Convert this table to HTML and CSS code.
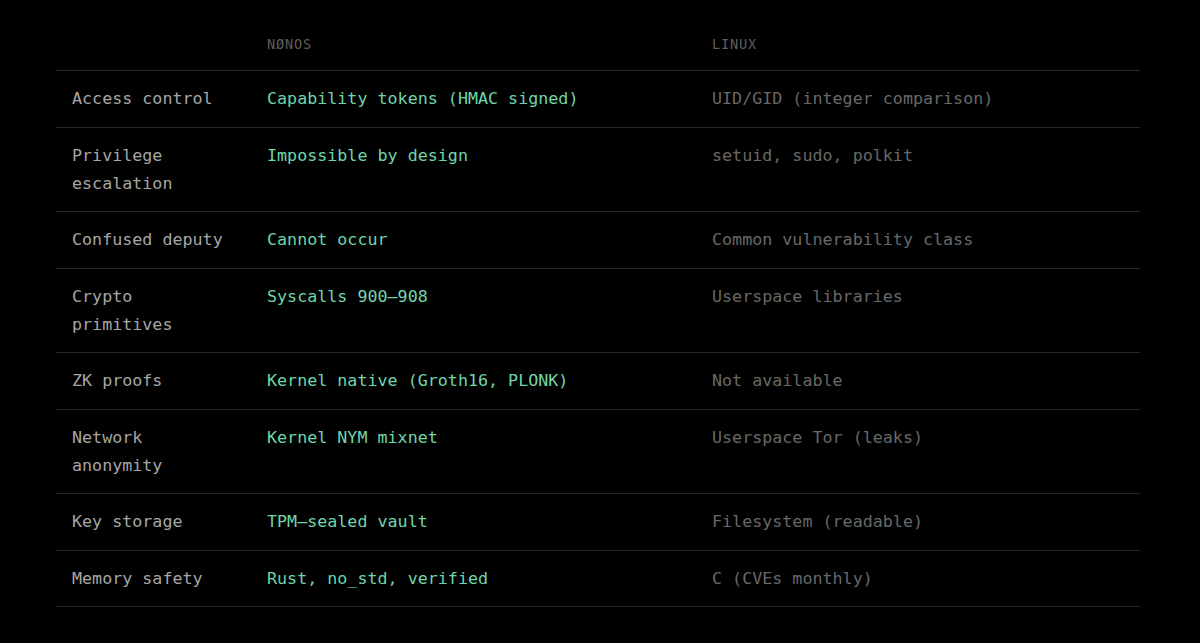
FILE: index.html
```html
<!DOCTYPE html>
<html lang="en">
<head>
<meta charset="utf-8">
<title>NØNOS vs Linux</title>
<link rel="stylesheet" href="styles.css">
</head>
<body>
<main class="page">
  <table class="cmp">
    <colgroup>
      <col class="c-feat">
      <col class="c-nonos">
      <col class="c-linux">
    </colgroup>
    <thead>
      <tr>
        <th></th>
        <th>NØNOS</th>
        <th>LINUX</th>
      </tr>
    </thead>
    <tbody>
      <tr><td class="feat">Access control</td><td class="nonos">Capability tokens (HMAC signed)</td><td class="linux">UID/GID (integer comparison)</td></tr>
      <tr><td class="feat">Privilege<br>escalation</td><td class="nonos">Impossible by design</td><td class="linux">setuid, sudo, polkit</td></tr>
      <tr><td class="feat">Confused deputy</td><td class="nonos">Cannot occur</td><td class="linux">Common vulnerability class</td></tr>
      <tr><td class="feat">Crypto<br>primitives</td><td class="nonos">Syscalls 900–908</td><td class="linux">Userspace libraries</td></tr>
      <tr><td class="feat">ZK proofs</td><td class="nonos">Kernel native (Groth16, PLONK)</td><td class="linux">Not available</td></tr>
      <tr><td class="feat">Network<br>anonymity</td><td class="nonos">Kernel NYM mixnet</td><td class="linux">Userspace Tor (leaks)</td></tr>
      <tr><td class="feat">Key storage</td><td class="nonos">TPM–sealed vault</td><td class="linux">Filesystem (readable)</td></tr>
      <tr><td class="feat">Memory safety</td><td class="nonos">Rust, no_std, verified</td><td class="linux">C (CVEs monthly)</td></tr>
    </tbody>
  </table>
</main>
</body>
</html>
```
FILE: styles.css
```css
html, body {
  margin: 0;
  padding: 0;
  background: #000;
}
body {
  font-family: "DejaVu Sans Mono", "Liberation Mono", monospace;
  color: #a3a3a3;
  width: 1200px;
  height: 643px;
  overflow: hidden;
}
.page {
  padding: 21px 60px 0 56px;
}
.cmp {
  width: 1084px;
  border-collapse: collapse;
  table-layout: fixed;
}
.c-feat { width: 195px; }
.c-nonos { width: 445px; }
.c-linux { width: 444px; }
.cmp th {
  text-align: left;
  font-weight: normal;
  font-size: 13.6px;
  letter-spacing: 0.8px;
  line-height: 22px;
  color: #5e5e5e;
  padding: 12px 16px 15px 16px;
  border-bottom: 1px solid #2a2a2a;
}
.cmp td {
  font-size: 16.7px;
  line-height: 28px;
  padding: 13px 16px 14.5px 16px;
  vertical-align: top;
  border-bottom: 1px solid #262626;
}
.feat { color: #a6a6a6; }
.nonos { color: #6fd5aa; }
.linux { color: #686868; }
```
